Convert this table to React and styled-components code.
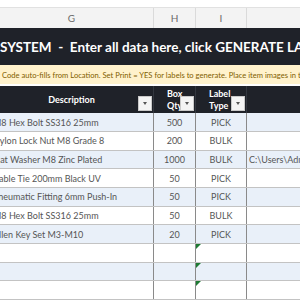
import React from "react";
import styled, { createGlobalStyle } from "styled-components";

const Global = createGlobalStyle`
  html, body { margin: 0; padding: 0; background: #ffffff; overflow: hidden; }
  body { font-family: Lato, "Open Sans", sans-serif; }
`;

const COLS = "164px 42px 51px 63px";

const Page = styled.div`
  width: 320px;
  height: 300px;
  margin-left: -10px;
  overflow: hidden;
  display: flex;
  flex-direction: column;
`;

const TopStrip = styled.div`
  height: 7px;
  background: #ffffff;
  border-bottom: 1px solid #e1e1e1;
`;

const ColHeaders = styled.div`
  display: grid;
  grid-template-columns: ${COLS};
  height: 20px;
  background: #f3f3f3;
`;

const ColLetter = styled.div`
  display: flex;
  align-items: center;
  justify-content: center;
  font-size: 10px;
  color: #6a6a6a;
  border-right: 1px solid #dadada;
  padding-top: 1px;
`;

const TitleBand = styled.div`
  height: 38px;
  background: #1f2229;
  color: #ffffff;
  font-weight: 700;
  font-size: 13.5px;
  display: flex;
  align-items: center;
  padding-left: 10px;
  padding-top: 1px;
  box-sizing: border-box;
  white-space: pre;
`;

const NoteBand = styled.div`
  height: 20px;
  background: #fff2cc;
  color: #7f6000;
  font-size: 7.6px;
  display: flex;
  align-items: center;
  padding-left: 12px;
  white-space: nowrap;
  border-bottom: 2px solid #ffffff;
`;

const HeaderRow = styled.div`
  display: grid;
  grid-template-columns: ${COLS};
  height: 27.5px;
  background: #1f2229;
`;

const HeadCell = styled.div`
  position: relative;
  display: flex;
  flex-direction: column;
  align-items: ${(p) => (p.$center ? "center" : "flex-start")};
  justify-content: center;
  padding-left: ${(p) => p.$pad || 0}px;
  color: #ffffff;
  font-weight: 700;
  font-size: 9px;
  line-height: 12px;
  border-right: 1px solid #33373f;
`;

const FilterBtn = styled.div`
  position: absolute;
  right: 1px;
  bottom: 2px;
  width: 14px;
  height: 15px;
  background: #f4f4f4;
  border: 1px solid #c9c9c9;
  box-sizing: border-box;
  display: flex;
  align-items: center;
  justify-content: center;
  &::after {
    content: "";
    border-left: 2.5px solid transparent;
    border-right: 2.5px solid transparent;
    border-top: 3px solid #555;
  }
`;

const Row = styled.div`
  display: grid;
  grid-template-columns: ${COLS};
  height: 18.67px;
  flex-shrink: 0;
  background: ${(p) => (p.$alt ? "#e9f0f9" : "#ffffff")};
  border-bottom: 1px solid #c3c3c3;
  box-sizing: border-box;
`;

const Cell = styled.div`
  position: relative;
  display: flex;
  align-items: center;
  justify-content: ${(p) => (p.$center ? "center" : "flex-start")};
  padding-left: ${(p) => p.$pad || 0}px;
  font-size: 9px;
  color: #555555;
  white-space: nowrap;
  border-right: ${(p) => (p.$noLine ? "none" : "1px solid #8a8a8a")};
`;

const ErrMark = styled.div`
  position: absolute;
  left: 0;
  top: 0;
  width: 0;
  height: 0;
  border-top: 5px solid #1e7b34;
  border-right: 5px solid transparent;
`;

const rows = [
  ["M8 Hex Bolt SS316 25mm", "500", "PICK", ""],
  ["Nylon Lock Nut M8 Grade 8", "200", "BULK", ""],
  ["Flat Washer M8 Zinc Plated", "1000", "BULK", "C:\\Users\\Admin\\Pictures\\washer.jpg"],
  ["Cable Tie 200mm Black UV", "50", "PICK", ""],
  ["Pneumatic Fitting 6mm Push-In", "50", "PICK", ""],
  ["M8 Hex Bolt SS316 25mm", "50", "BULK", ""],
  ["Allen Key Set M3-M10", "20", "PICK", ""],
  ["", "", "", "", true],
  ["", "", "", "", true],
  ["", "", "", "", true],
];

export default function App() {
  return (
    <>
      <Global />
      <Page>
        <TopStrip />
        <ColHeaders>
          <ColLetter>G</ColLetter>
          <ColLetter>H</ColLetter>
          <ColLetter>I</ColLetter>
          <ColLetter />
        </ColHeaders>
        <TitleBand>{"SYSTEM  -  Enter all data here, click GENERATE LABELS"}</TitleBand>
        <NoteBand>
          Code auto-fills from Location. Set Print = YES for labels to generate. Place item images in the folder.
        </NoteBand>
        <HeaderRow>
          <HeadCell $center>
            Description
            <FilterBtn />
          </HeadCell>
          <HeadCell $pad={13}>
            <span>Box</span>
            <span>Qty</span>
            <FilterBtn />
          </HeadCell>
          <HeadCell $pad={13}>
            <span>Label</span>
            <span>Type</span>
            <FilterBtn />
          </HeadCell>
          <HeadCell />
        </HeaderRow>
        {rows.map((r, i) => (
          <Row key={i} $alt={i % 2 === 0}>
            <Cell $pad={3}>{r[0]}</Cell>
            <Cell $center>{r[1]}</Cell>
            <Cell $center>
              {r[4] && <ErrMark />}
              {r[2]}
            </Cell>
            <Cell $pad={2} $noLine>{r[3]}</Cell>
          </Row>
        ))}
      </Page>
    </>
  );
}
